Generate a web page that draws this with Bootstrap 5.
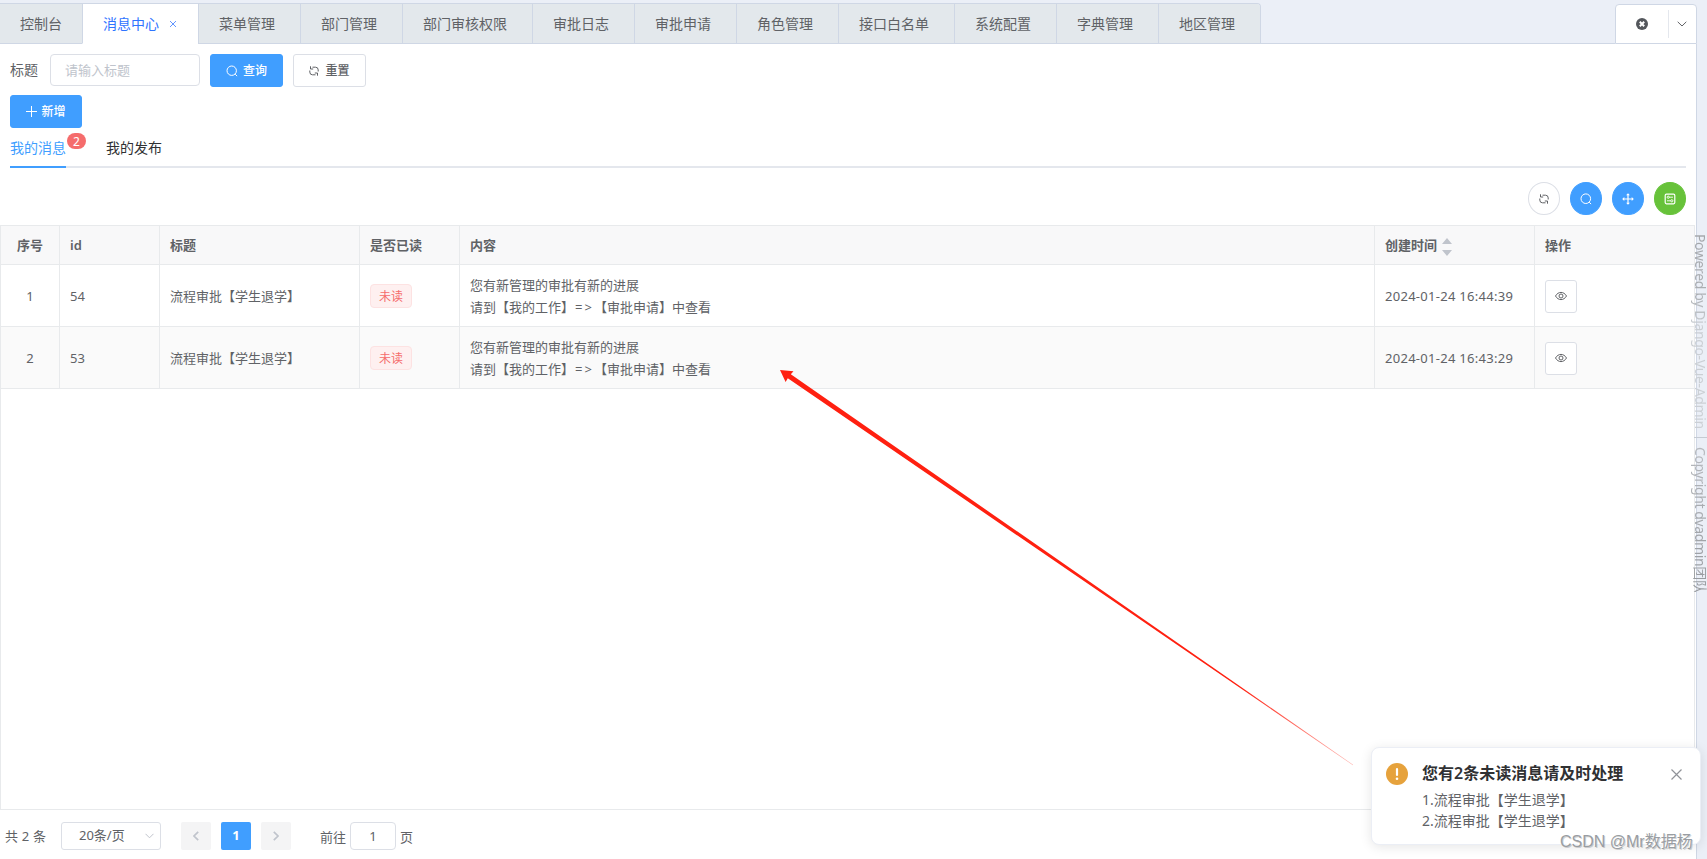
<!DOCTYPE html>
<html lang="zh-CN">
<head>
<meta charset="utf-8">
<title>消息中心</title>
<link rel="stylesheet" href="https://cdn.jsdelivr.net/npm/bootstrap@5.3.0/dist/css/bootstrap.min.css">
<style>
body{width:1707px;height:859px;overflow:hidden;background:#ebeff7;font:13px/1.5 "Noto Sans","Noto Sans CJK SC",sans-serif;color:#606266;position:relative}
svg{fill:none;stroke:currentColor;display:block;flex:none}
.page-main{width:1697px;height:859px}
.tab-bar{height:44px;padding-top:3px}
.tab-strip{height:41px;border-top:1px solid #cfd7e5;border-right:1px solid #cfd7e5;border-radius:0 4px 0 0;overflow:hidden}
.tab-item{height:40px;padding:0 25px 0 20px;line-height:39px;font-size:14px;background:#e3e8ec;border-left:1px solid #cfd7e5;border-bottom:1px solid #cfd7e5;white-space:nowrap;color:#606266}
.tab-item:first-child{border-left:0;padding-right:20px}
.tab-item.current{background:#fff;color:#2f74ff;border-bottom-color:#fff;width:116px;padding-right:0}
.tab-rest{border-bottom:1px solid #cfd7e5}
.tab-ctrl{width:82px;margin-top:1px;border:1px solid #cfd7e5;border-radius:4px 4px 0 0;background:#fff;height:40px}
.tab-ctrl .part1{width:53px;height:28px;border-right:1px solid #e4e7ed}
.panel{height:815px;background:#fff;border-right:1px solid #cfd7e5}
.btn{--bs-btn-font-size:12px;--bs-btn-border-radius:3px;--bs-btn-padding-x:0;--bs-btn-padding-y:0;height:33px;display:flex;align-items:center;justify-content:center;line-height:1;font-weight:500}
.btn-primary{--bs-btn-bg:#409eff;--bs-btn-border-color:#409eff}
.btn-light{--bs-btn-bg:#fff;--bs-btn-border-color:#dcdfe6;--bs-btn-color:#606266}
.btn-success{--bs-btn-bg:#67c23a;--bs-btn-border-color:#67c23a}
.rnd{width:32px;height:33px;border-radius:50%}
.form-control{border:1px solid #dcdfe6;border-radius:4px;font-size:13px;color:#606266}
.form-control::placeholder{color:#c0c4cc}
.kw{width:150px;height:32px;padding:0 14px 1px}
.msg-tabs{height:40px;margin:0 10px;border-bottom:2px solid #e4e7ed;font-size:14px;line-height:40px}
.msg-tabs .one{height:40px;width:56px;color:#303133;white-space:nowrap}
.msg-tabs .one.on{color:#409eff;border-bottom:2px solid #409eff}
.msg-tabs .badge{top:5px;left:57px;width:19px;height:16px;padding:0;line-height:18px;background:#f56c6c;font-size:12px;font-weight:400;border-radius:8px}
.grid-box{height:585px;border:1px solid #e8eaec;width:1695px}
.grid-tbl{table-layout:fixed;width:1693px;margin:0;font-size:13px;color:#606266;border-collapse:separate;border-spacing:0}
.grid-tbl th,.grid-tbl td{border-right:1px solid #e8eaec;border-bottom:1px solid #e8eaec;padding:0 10px;vertical-align:middle}
.grid-tbl th:last-child,.grid-tbl td:last-child{border-right:0}
.grid-tbl th{height:39px;background:#f8f8f9;font-weight:600;padding-top:1px}
.grid-tbl td{height:62px;line-height:22px}
.grid-tbl td:last-child{padding:1px 10px 0}
.grid-tbl tr.alt td{background:#fafafa}
.stamp{letter-spacing:.28px}
.to{letter-spacing:2px;margin-left:1px}
.unread{display:block;border:1px solid #fde2e2;background:#fef0f0;color:#f56c6c;font-size:12px;line-height:23px;height:24px;width:42px;text-align:center;border-radius:4px;margin-top:1px}
.eye{width:32px}
.pager{height:28px;margin:12px 0 0 5px}
.pager span{line-height:18px}
.pager .sel{width:100px;height:28px;border:1px solid #dcdfe6;border-radius:3px;padding:0 6px 0 17px}
.pager .pg{width:30px;height:28px;background:#f4f4f5;color:#c0c4cc;border-radius:2px;padding-bottom:1px}
.pager .pg.on{background:#409eff;color:#fff;font-weight:700}
.pager .go{width:46px;height:28px;padding:0;text-align:center}
.side-text{position:absolute;left:1691px;top:234px;width:16px;font-size:14px}
.side-text div{writing-mode:vertical-rl;text-orientation:sideways;white-space:nowrap;line-height:16px;color:transparent;-webkit-background-clip:text;background-clip:text;padding-left:1px}
.side-text .pw{height:203px;letter-spacing:-.36px;background-image:linear-gradient(#a3a6aa,#acafb3 30%,#c9cdd2 45%,#ccd0d5)}
.side-text .cp{height:154px;padding-top:9px;letter-spacing:-.38px;background-image:linear-gradient(#b8bbc0,#96999d)}
.side-text hr{margin:0 0 0 3px;border-color:#c5cbd3;opacity:1}
.notice{position:absolute;left:1371px;top:747px;width:330px;height:98px;background:#fff;border:1px solid #ebeef5;border-radius:8px;box-shadow:0 2px 12px rgba(0,0,0,.1);padding:14px 18px 0 14px}
.notice h2{font-size:16px;font-weight:600;color:#303133;margin:-1px 0 0;line-height:24px;white-space:nowrap}
.notice .body-text{font-size:14px;line-height:21px;margin-top:4px;color:#606266}
.wm{position:absolute;left:1560px;top:830px;font:16px/24px "Liberation Sans","Noto Sans CJK SC",sans-serif;color:#999da2;text-shadow:-1px -1px 0 #fff,1px 1px 0 #77797c55;white-space:nowrap}
.arrow{position:absolute;left:0;top:0;pointer-events:none}
</style>
</head>
<body>
<div class="page-main d-flex flex-column">
  <header class="tab-bar d-flex">
    <div class="tab-strip d-flex">
      <div class="tab-item">控制台</div>
      <div class="tab-item current d-flex align-items-center"><span>消息中心</span><svg class="ms-auto" style="margin-right:21px;opacity:.75" width="8" height="8" viewBox="0 0 8 8"><path d="M1 1l6 6M7 1L1 7"/></svg></div>
      <div class="tab-item">菜单管理</div>
      <div class="tab-item">部门管理</div>
      <div class="tab-item">部门审核权限</div>
      <div class="tab-item">审批日志</div>
      <div class="tab-item">审批申请</div>
      <div class="tab-item">角色管理</div>
      <div class="tab-item">接口白名单</div>
      <div class="tab-item">系统配置</div>
      <div class="tab-item">字典管理</div>
      <div class="tab-item">地区管理</div>
    </div>
    <div class="tab-rest flex-grow-1"></div>
    <div class="tab-ctrl d-flex align-items-center">
      <div class="part1 d-flex align-items-center justify-content-center"><svg width="12" height="12" viewBox="0 0 12 12"><circle cx="6" cy="6" r="6" fill="#54575c" stroke="none"/><path d="M3.800 3.800l4.400 4.400M8.200 3.800L3.800 8.200" stroke="#fff" stroke-width="2"/></svg></div>
      <div class="flex-grow-1 d-flex justify-content-center" style="padding-right:2px"><svg width="10" height="6" viewBox="0 0 10 6"><path d="M.7.8L5 5 9.300.8"/></svg></div>
    </div>
  </header>

  <main class="panel">
    <form class="d-flex" style="padding:10px 0 0 10px">
      <label class="d-flex align-items-center" style="font-size:14px;width:40px;height:31px">标题</label>
      <input class="form-control kw" placeholder="请输入标题">
      <button type="button" class="btn btn-primary" style="width:73px;margin-left:10px;gap:5px"><svg width="12" height="12" viewBox="0 0 12 12"><circle cx="5.700" cy="5.700" r="4.700"/><path d="M9.200 9.200l1.900 1.900"/></svg>查询</button>
      <button type="button" class="btn btn-light" style="width:73px;margin-left:10px;gap:6px"><svg width="10" height="10" viewBox="0 0 10 10"><path d="M1.500.3v2.700h2.700M3.500 1.200H6.500A2.700 2.700 0 0 1 9.200 3.900V5.500M8.500 9.700V7H5.800M6.500 8.800H3.500A2.700 2.700 0 0 1 .8 6.100V4.500"/></svg>重置</button>
    </form>
    <button type="button" class="btn btn-primary" style="width:72px;margin:8px 0 0 10px;gap:4px"><svg width="11" height="11" viewBox="0 0 11 11"><path d="M5.500 0v11M0 5.500h11"/></svg>新增</button>
    <div class="msg-tabs d-flex">
      <div class="one on position-relative">我的消息<span class="badge position-absolute">2</span></div>
      <div class="one" style="margin-left:40px">我的发布</div>
    </div>
    <div class="d-flex justify-content-end" style="gap:10px;padding:14px 10px 10px">
      <button type="button" class="btn btn-light rnd"><svg width="10" height="10" viewBox="0 0 10 10"><path d="M1.500.3v2.700h2.700M3.500 1.200H6.500A2.700 2.700 0 0 1 9.200 3.900V5.500M8.500 9.700V7H5.800M6.500 8.800H3.500A2.700 2.700 0 0 1 .8 6.100V4.500"/></svg></button>
      <button type="button" class="btn btn-primary rnd"><svg width="12" height="12" viewBox="0 0 12 12"><circle cx="5.800" cy="5.700" r="4.800"/><path d="M9.200 9.200l1.900 1.900"/></svg></button>
      <button type="button" class="btn btn-primary rnd"><svg width="12" height="12" viewBox="0 0 12 12"><path d="M6 1v10M1 6h10" stroke-width="1.200"/><path d="M6 .2l1.900 2.100H4.100zM6 11.800l1.900-2.100H4.100zM.2 6l2.100-1.900v3.800zM11.800 6L9.700 4.100v3.800z" fill="currentColor" stroke="none"/></svg></button>
      <button type="button" class="btn btn-success rnd"><svg width="12" height="12" viewBox="0 0 12 12"><rect x="1.200" y="1.200" width="9.600" height="9.600" rx="1.200" stroke-width="1.200"/><path d="M5.200 4.200h3.800M3 7.800h3.700" stroke-width=".9"/><circle cx="4.200" cy="4.200" r="1.100" stroke-width=".9"/><circle cx="7.800" cy="7.800" r="1.100" stroke-width=".9"/></svg></button>
    </div>

    <div class="grid-box">
      <table class="grid-tbl">
        <colgroup><col style="width:59px"><col style="width:100px"><col style="width:200px"><col style="width:100px"><col style="width:915px"><col style="width:160px"><col></colgroup>
        <thead><tr><th class="text-center">序号</th><th>id</th><th>标题</th><th>是否已读</th><th>内容</th>
          <th><div class="d-flex align-items-center" style="gap:5px">创建时间<svg width="10" height="18" viewBox="0 0 10 18" style="margin-top:3px"><path d="M5 0l5 6H0zM5 18l5-6H0z" fill="#c0c4cc" stroke="none"/></svg></div></th><th>操作</th></tr></thead>
        <tbody>
          <tr><td class="text-center">1</td><td>54</td><td>流程审批【学生退学】</td><td><span class="unread">未读</span></td><td>您有新管理的审批有新的进展<br>请到【我的工作】<span class="to">=&gt;</span>【审批申请】中查看</td><td class="stamp">2024-01-24 16:44:39</td>
            <td><button type="button" class="btn btn-light eye"><svg width="12" height="10" viewBox="0 0 12 10"><path d="M.5 5C3.200.2 8.800.2 11.500 5 8.800 9.800 3.200 9.800.5 5z"/><circle cx="6" cy="5" r="2"/></svg></button></td></tr>
          <tr class="alt"><td class="text-center">2</td><td>53</td><td>流程审批【学生退学】</td><td><span class="unread">未读</span></td><td>您有新管理的审批有新的进展<br>请到【我的工作】<span class="to">=&gt;</span>【审批申请】中查看</td><td class="stamp">2024-01-24 16:43:29</td>
            <td><button type="button" class="btn btn-light eye"><svg width="12" height="10" viewBox="0 0 12 10"><path d="M.5 5C3.200.2 8.800.2 11.500 5 8.800 9.800 3.200 9.800.5 5z"/><circle cx="6" cy="5" r="2"/></svg></button></td></tr>
        </tbody>
      </table>
    </div>

    <div class="pager d-flex align-items-center">
      <span style="width:56px;letter-spacing:.2px">共 2 条</span>
      <div class="sel d-flex align-items-center justify-content-between">20条/页<svg width="9" height="6" viewBox="0 0 9 6" style="color:#c0c4cc"><path d="M.5.8l4 4 4-4"/></svg></div>
      <div class="pg d-flex align-items-center justify-content-center" style="margin-left:20px"><svg width="6" height="10" viewBox="0 0 6 10" stroke-width="1.700"><path d="M5.200.8L1 5l4.200 4.200"/></svg></div>
      <div class="pg on d-flex align-items-center justify-content-center" style="margin-left:10px">1</div>
      <div class="pg d-flex align-items-center justify-content-center" style="margin-left:10px"><svg width="6" height="10" viewBox="0 0 6 10" stroke-width="1.700"><path d="M.8.8L5 5 .8 9.200"/></svg></div>
      <span style="margin:1px 4px 0 29px">前往</span>
      <input class="form-control go" value="1">
      <span style="margin:1px 0 0 4px">页</span>
    </div>
  </main>
</div>

<div class="side-text"><div class="pw">Powered by Django-Vue-Admin</div><hr><div class="cp">Copyright dvadmin团队</div></div>

<svg class="arrow" width="1707" height="859" viewBox="0 0 1707 859" stroke="none">
  <defs><linearGradient id="fade" gradientUnits="userSpaceOnUse" x1="780" y1="370" x2="1353" y2="765"><stop offset="0" stop-color="#ff2010"/><stop offset=".8" stop-color="#ff2010"/><stop offset="1" stop-color="#ff2010" stop-opacity=".3"/></linearGradient></defs>
  <path d="M780 370L793.500 371.300 790.800 374.200 1353.200 764.800 1352.800 765.200 787.800 378.200 785.600 382z" fill="url(#fade)" stroke="none"/>
</svg>

<aside class="notice">
  <div class="d-flex align-items-start">
    <svg width="22" height="22" viewBox="0 0 22 22" style="margin-top:1px"><circle cx="11" cy="11" r="11" fill="#e6a23c" stroke="none"/><path d="M11 6v6" stroke="#fff" stroke-width="2.200" stroke-linecap="round"/><circle cx="11" cy="15.800" r="1.300" fill="#fff" stroke="none"/></svg>
    <div style="margin-left:14px">
      <h2>您有2条未读消息请及时处理</h2>
      <div class="body-text">1.流程审批【学生退学】<br>2.流程审批【学生退学】</div>
    </div>
    <svg class="ms-auto" width="11" height="11" viewBox="0 0 11 11" style="margin-top:7px;color:#909399"><path d="M.5.5l10 10M10.500.5l-10 10" stroke-width="1.200"/></svg>
  </div>
</aside>
<div class="wm">CSDN @Mr数据杨</div>
<script src="https://cdn.jsdelivr.net/npm/bootstrap@5.3.0/dist/js/bootstrap.bundle.min.js"></script>
</body>
</html>
